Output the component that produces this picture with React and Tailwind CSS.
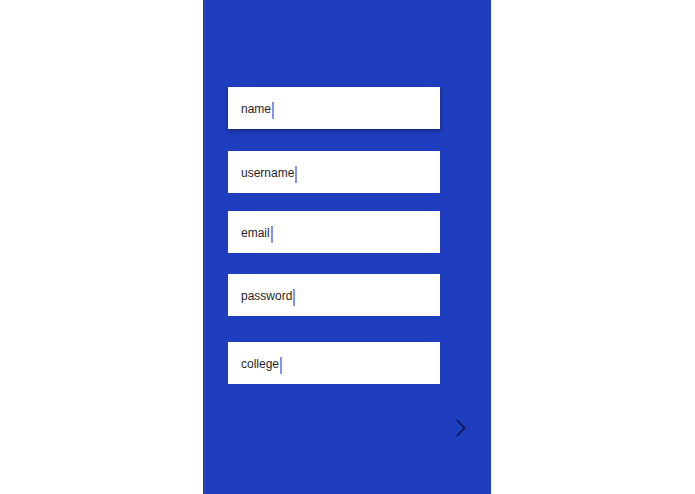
import React from 'react';

const fields = [
  { label: 'name', gap: 'mt-0', shadow: true },
  { label: 'username', gap: 'mt-[22px]' },
  { label: 'email', gap: 'mt-[18px]' },
  { label: 'password', gap: 'mt-[21px]' },
  { label: 'college', gap: 'mt-[26px]' },
];

const Field = ({ label, gap, shadow }) => (
  <div
    className={`${gap} h-[42px] w-[212px] bg-white flex items-center pl-[13px] ${
      shadow ? 'shadow-[0_2px_4px_rgba(0,0,0,0.4)]' : ''
    }`}
  >
    <span className="text-[12px] text-[#1f1f1f] leading-[16px] mt-[1px]">{label}</span>
    <span className="ml-[1px] mt-[5px] w-[2px] h-[17px] bg-[#8393f0]"></span>
  </div>
);

const App = () => {
  return (
    <div
      className="w-full h-[494px] bg-white flex pl-[203px]"
      style={{ fontFamily: '"Liberation Sans", Arial, sans-serif' }}
    >
      <div className="w-[288px] h-full bg-[#1f3dbf] pt-[87px] pl-[25px] flex flex-col">
        {fields.map((f) => (
          <Field key={f.label} {...f} />
        ))}
        <div className="mt-[35px] flex justify-end pr-[25px]">
          <svg width="10" height="18" viewBox="0 0 10 18" fill="none">
            <polyline
              points="1.5,1.5 8.5,9 1.5,16.5"
              stroke="#0c1650"
              strokeWidth="1.8"
              strokeLinecap="round"
              strokeLinejoin="round"
            />
          </svg>
        </div>
      </div>
    </div>
  );
};

export default App;
